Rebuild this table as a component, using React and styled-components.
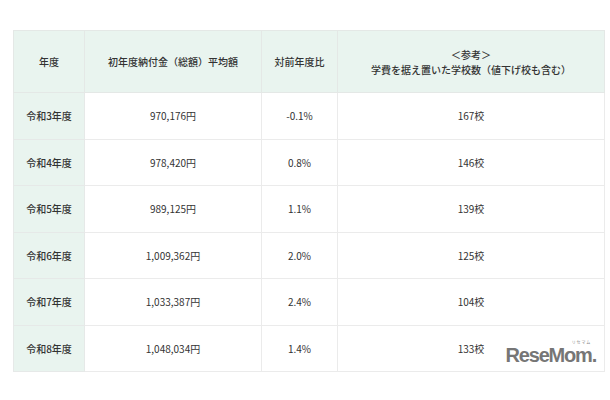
import styled, { createGlobalStyle } from 'styled-components';

const GlobalStyle = createGlobalStyle`
  html, body {
    margin: 0;
    padding: 0;
    background: #ffffff;
  }
  body {
    font-family: 'Noto Sans CJK JP', 'Noto Sans', sans-serif;
    color: #333333;
  }
`;

const Page = styled.div`
  width: 610px;
  height: 400px;
  padding: 30px 0 0 13px;
  box-sizing: border-box;
  position: relative;
`;

const Table = styled.table`
  width: 591px;
  border-collapse: collapse;
  table-layout: fixed;
  font-size: 10px;
  line-height: 15px;
`;

const HeadCell = styled.th`
  height: 61px;
  padding: 0;
  background: #e9f4ef;
  border: 1px solid #e4e8e6;
  font-weight: 500;
  text-align: center;
  vertical-align: middle;
  color: #333;
`;

const YearCell = styled.td`
  height: 45.5px;
  padding: 0;
  background: #e9f4ef;
  border: 1px solid #e6e9e8;
  font-weight: 500;
  text-align: center;
  color: #333;
`;

const Cell = styled.td`
  height: 45.5px;
  padding: 0;
  background: #ffffff;
  border: 1px solid #ebebeb;
  text-align: center;
  color: #333;
`;

// watermark sits over the last row
const Logo = styled.div`
  position: absolute;
  left: 503px;
  top: 340px;
  width: 93px;
  display: flex;
  flex-direction: column;
  align-items: flex-end;
  color: #767676;
`;

const LogoKana = styled.span`
  font-size: 4px;
  line-height: 5px;
  margin-right: 5px;
  letter-spacing: 0.8px;
  color: #888;
`;

const LogoText = styled.span`
  font-family: 'Liberation Sans', Arial, sans-serif;
  font-weight: 700;
  font-size: 20px;
  line-height: 20px;
  letter-spacing: -1.2px;
  white-space: nowrap;
`;

const rows = [
  ['令和3年度', '970,176円', '-0.1%', '167校'],
  ['令和4年度', '978,420円', '0.8%', '146校'],
  ['令和5年度', '989,125円', '1.1%', '139校'],
  ['令和6年度', '1,009,362円', '2.0%', '125校'],
  ['令和7年度', '1,033,387円', '2.4%', '104校'],
  ['令和8年度', '1,048,034円', '1.4%', '133校'],
];

export default function App() {
  return (
    <Page>
      <GlobalStyle />
      <Table>
        <colgroup>
          <col style={{ width: 71 }} />
          <col style={{ width: 177 }} />
          <col style={{ width: 76 }} />
          <col style={{ width: 267 }} />
        </colgroup>
        <thead>
          <tr>
            <HeadCell>年度</HeadCell>
            <HeadCell>初年度納付金（総額）平均額</HeadCell>
            <HeadCell>対前年度比</HeadCell>
            <HeadCell>
              ＜参考＞
              <br />
              学費を据え置いた学校数（値下げ校も含む）
            </HeadCell>
          </tr>
        </thead>
        <tbody>
          {rows.map((r) => (
            <tr key={r[0]}>
              <YearCell>{r[0]}</YearCell>
              <Cell>{r[1]}</Cell>
              <Cell>{r[2]}</Cell>
              <Cell>{r[3]}</Cell>
            </tr>
          ))}
        </tbody>
      </Table>
      <Logo>
        <LogoKana>リセマム</LogoKana>
        <LogoText>ReseMom.</LogoText>
      </Logo>
    </Page>
  );
}
